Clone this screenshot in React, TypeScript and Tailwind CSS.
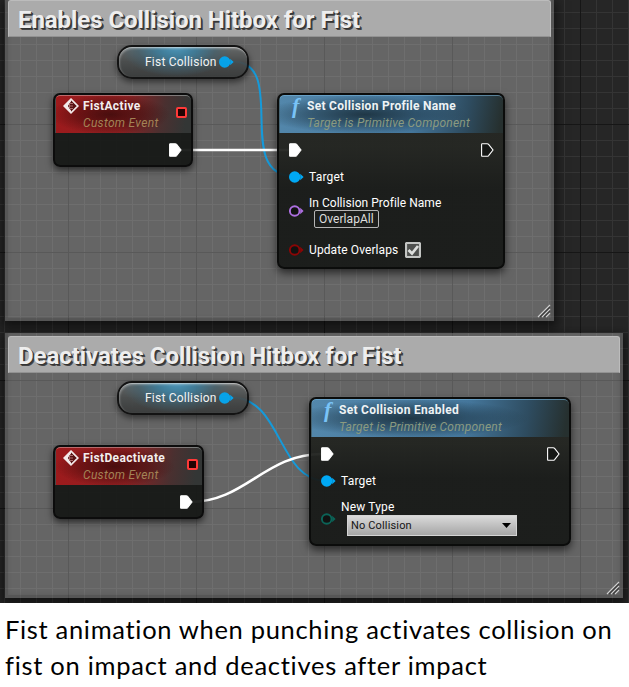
import type { ReactNode } from 'react';

const FONT = "font-['Roboto','Liberation_Sans',sans-serif]";

function Grid() {
  const cols = Array.from({ length: 40 }, (_, i) => 4 + i * 16);
  const rows = Array.from({ length: 38 }, (_, i) => -4 + i * 16);
  const shade = (v: number, origin: number) => ((v - origin) % 128 === 0 ? '#161616' : '#343434');
  return (
    <svg className="absolute inset-0" width="629" height="603" shapeRendering="crispEdges">
      {cols.filter((x) => (x - 68) % 128 !== 0).map((x) => (
        <rect key={x} x={x} y="0" width="1" height="603" fill="#343434" />
      ))}
      {rows.map((y) => (
        <rect key={y} x="0" y={y} width="629" height="1" fill={shade(y, 124)} />
      ))}
      {cols.filter((x) => (x - 68) % 128 === 0).map((x) => (
        <rect key={x} x={x} y="0" width="1" height="603" fill="#161616" />
      ))}
    </svg>
  );
}

function Comment({ title, place, bar }: { title: string; place: string; bar: string }) {
  return (
    <section className={`absolute border-3 border-t-0 border-black/15 bg-white/29 bg-clip-border shadow-[0_4px_10px_3px_rgba(0,0,0,0.5)] ${place}`}>
      <div className="pointer-events-none absolute inset-0 shadow-[inset_0_0_4px_rgba(0,0,0,0.12)]" />
      <header className={`relative flex h-[37px] items-center rounded-t-[3px] border border-[#bcbcbc] border-b-[#929292] bg-[#ababab] pl-[9px] ${bar}`}>
        <h2 className="text-[24px] leading-[34px] font-bold tracking-[-0.06px] whitespace-nowrap text-[#eeeeee] [text-shadow:1px_1px_0_#333,2px_2px_0_#444]">
          {title}
        </h2>
      </header>
      <svg className="absolute right-0 bottom-0" width="14" height="14" fill="none" strokeWidth="1.2">
        <path d="M1 13 13 1M5 13l8-8M9 13l4-4" stroke="#d0d0d0" />
        <path d="M3 13 13 3M7 13l6-6" stroke="#3d3d3d" />
      </svg>
    </section>
  );
}

function ExecPin({ filled = true }: { filled?: boolean }) {
  return (
    <svg width="13" height="14" viewBox="0 0 13 14" className="shrink-0">
      <path d="M1.2.7H6.2Q7 .7 7.6 1.4L12 7 7.6 12.6Q7 13.3 6.2 13.3H1.2Q.6 13.3.6 12.6V1.4Q.6.7 1.2.7Z" fill={filled ? '#fff' : '#151715'} stroke="#fff" strokeWidth="1.1" />
    </svg>
  );
}

function DataPin({ color, hollow = false }: { color: string; hollow?: boolean }) {
  return (
    <svg width="16" height="12" viewBox="0 0 16 12" className="shrink-0">
      <path d="M11.2 2.8 14.6 6l-3.4 3.2Z" fill={color} />
      <circle cx="5.7" cy="6" r={hollow ? 4.8 : 5.7} fill={hollow ? '#111211' : color} stroke={hollow ? color : 'none'} strokeWidth="1.9" />
    </svg>
  );
}

function VariableNode({ place }: { place: string }) {
  return (
    <div className={`absolute h-[34px] w-[132px] rounded-[15px] border-2 border-[#0d0d0d] bg-[radial-gradient(ellipse_56px_30px_at_45%_0%,#4a9cc2_0%,#3d7d9b_35%,rgba(60,100,118,0.55)_70%,transparent_100%),linear-gradient(#666969,#484b4b_50%,#383a3a)] opacity-92 shadow-[0_3px_6px_rgba(0,0,0,0.55)] ${place}`}>
      <div className="flex h-[30px] items-center rounded-[13px] border-t border-white/55 pr-[12px] pb-[2px] pl-[26px] shadow-[inset_1px_1px_2px_rgba(255,255,255,0.3)]">
        <span className="w-[76px] pt-px text-[12px] leading-[14px] tracking-[0.22px] whitespace-nowrap text-white">Fist Collision</span>
        <DataPin color="#00a8f4" />
      </div>
    </div>
  );
}

function EventNode({ title, place }: { title: string; place: string }) {
  return (
    <div className={`absolute h-[74px] overflow-hidden rounded-[7px] border-2 border-[#0c0c0c] bg-[#161816]/95 shadow-[0_3px_7px_rgba(0,0,0,0.6)] ${place}`}>
      <header className="relative flex h-[38px] rounded-t-[5px] border-t border-l border-t-white/35 border-l-white/10 bg-[radial-gradient(ellipse_60px_20px_at_40%_50%,rgba(50,8,8,0.75),rgba(60,8,8,0.45)_55%,transparent),linear-gradient(100deg,#9e1a1c_0%,#8c2022_50%,#4a3030_78%,#333635_95%)] pl-[7px]">
        <svg className="mt-[2px] shrink-0" width="16" height="16" viewBox="0 0 16 16">
          <path d="M8 1.2 14.8 8 8 14.8 1.2 8Z" fill="#571012" stroke="#f3eaea" strokeWidth="1.7" />
          <path d="M8 1 1 8l7 7V12.5L4.8 8 8 3.5Z" fill="#f3eaea" />
          <path d="M6.5 5.5h3.5M6.5 8h3.5M6.5 10.5h3.5M6.5 5v6" stroke="#a86b6b" />
        </svg>
        <div className="pl-[4px]">
          <div className="mt-[2px] text-[12px] leading-[16px] font-bold tracking-[0.36px] whitespace-nowrap text-[#f3eeee]">{title}</div>
          <div className="mt-px text-[12px] leading-[16px] tracking-[0.3px] whitespace-nowrap text-[#a38356] italic">Custom Event</div>
        </div>
        <span className="absolute top-[11px] right-[4px] size-[11px] rounded-[2px] border-2 border-[#ff3938] bg-[#230303]" />
      </header>
      <div className="flex justify-end pt-[10px] pr-[9px]"><ExecPin /></div>
    </div>
  );
}

function FunctionNode({ title, place, children }: { title: string; place: string; children: ReactNode }) {
  return (
    <div className={`absolute overflow-hidden rounded-[7px] border-2 border-[#0b0c0b] bg-linear-to-b from-[#222420]/95 from-30% to-[#181a18]/95 to-55% shadow-[0_4px_8px_rgba(0,0,0,0.6)] ${place}`}>
      <header className="flex h-[38px] rounded-t-[5px] border-t border-l border-t-[#78b4da]/60 border-l-[#78b4da]/40 bg-[radial-gradient(ellipse_46%_19px_at_38%_50%,rgba(24,43,54,0.85),rgba(29,52,67,0.5)_55%,transparent),linear-gradient(100deg,#5387ab_0%,#44769b_60%,#2e4c60_83%,#26302f_98%)] pl-[10px]">
        <span className="w-[15px] shrink-0 pl-[2px] font-['Liberation_Serif',serif] text-[22px] leading-[20px] font-bold text-[#79c3f7] italic">f</span>
        <div className="pl-[2px]">
          <div className="mt-[2px] text-[12px] leading-[16px] font-bold tracking-[0.29px] whitespace-nowrap text-[#eef3f5]">{title}</div>
          <div className="mt-px text-[12px] leading-[16px] tracking-[0.22px] whitespace-nowrap text-[#8a9a80] italic">Target is Primitive Component</div>
        </div>
      </header>
      <div className="flex justify-between pt-[10px] pr-[9px] pl-[10px]">
        <ExecPin />
        <ExecPin filled={false} />
      </div>
      <div className="mt-[12px] flex h-[16px] items-center gap-[4px] pl-[10px]">
        <div className="pb-px"><DataPin color="#00a8f4" /></div>
        <span className="text-[12px] leading-[16px] tracking-[0.2px] text-white">Target</span>
      </div>
      {children}
    </div>
  );
}

export default function App() {
  return (
    <main className={`h-[687px] w-[629px] overflow-hidden bg-white ${FONT}`}>
      <div className="relative h-[603px] overflow-hidden bg-[#262626]">
        <Grid />
        <Comment title="Enables Collision Hitbox for Fist" place="top-0 left-[5px] h-[321px] w-[549px]" bar="pt-[3px]" />
        <Comment title="Deactivates Collision Hitbox for Fist" place="top-[333px] left-[5px] h-[265px] w-[618px] pt-[3px]" bar="pt-[2px]" />
        <svg className="absolute inset-0" width="629" height="603" fill="none">
          <path d="M232 61.5C290 61.5 232 176 294 176" stroke="#159ada" strokeWidth="2" />
          <path d="M232 397.5C282 397.5 278 481 326 481" stroke="#159ada" strokeWidth="2" />
          <path d="M180 150H292" stroke="#fff" strokeWidth="2.6" />
          <path d="M190 502C245 502 265 454 322 454" stroke="#fff" strokeWidth="2.6" />
        </svg>

        <VariableNode place="top-[45px] left-[117px]" />
        <EventNode title="FistActive" place="top-[93px] left-[53px] w-[140px]" />
        <FunctionNode title="Set Collision Profile Name" place="top-[93px] left-[277px] h-[176px] w-[228px]">
          <div className="mt-[10px] flex items-center gap-[4px] pl-[10px]">
            <div className="pb-[3px]"><DataPin color="#ad6fe0" hollow /></div>
            <div className="pb-px">
              <div className="text-[12px] leading-[16px] tracking-[0.03px] whitespace-nowrap text-white">In Collision Profile Name</div>
              <div className="mt-[-1px] mb-px ml-[5px] flex h-[18px] w-[65px] items-center rounded-[2px] border border-[#b5b5b5] pl-[4px] text-[12px] leading-[16px] tracking-[0.05px] text-[#dedede]">OverlapAll</div>
            </div>
          </div>
          <div className="mt-[12px] flex h-[16px] items-center gap-[4px] pl-[10px]">
            <DataPin color="#8b0505" hollow />
            <span className="w-[92px] text-[12px] leading-[16px] tracking-[0.1px] whitespace-nowrap text-white">Update Overlaps</span>
            <svg width="16" height="16" viewBox="0 0 16 16">
              <rect x="1" y="1" width="14" height="14" rx="1" fill="#4e504e" stroke="#c3c5c3" strokeWidth="2.2" />
              <path d="M3.5 8 7 11.5 13 4" fill="none" stroke="#dcdedc" strokeWidth="2.8" />
            </svg>
          </div>
        </FunctionNode>

        <VariableNode place="top-[381px] left-[117px]" />
        <EventNode title="FistDeactivate" place="top-[445px] left-[53px] w-[151px]" />
        <FunctionNode title="Set Collision Enabled" place="top-[397px] left-[309px] h-[149px] w-[262px]">
          <div className="mt-[10px] flex items-center gap-[4px] pl-[10px]">
            <div className="pt-[2px]"><DataPin color="#0b6357" hollow /></div>
            <div>
              <div className="text-[12px] leading-[16px] tracking-[0.15px] text-white">New Type</div>
              <div className="ml-[6px] flex h-[21px] w-[170px] items-center justify-between border border-[#d4d4d4] bg-linear-to-b from-[#dadada] to-[#a6a6a6] pr-[5px] pl-[3px] text-[11px] leading-[16px] tracking-[0.15px] text-[#151515]">
                No Collision
                <svg width="9" height="5"><path d="M0 0h9L4.5 5Z" fill="#000" /></svg>
              </div>
            </div>
          </div>
        </FunctionNode>
      </div>
      <p className="pt-[8px] pl-[5px] font-['Lato',sans-serif] text-[25.5px] leading-[36px] text-black">
        <span className="block tracking-[0.68px] whitespace-nowrap">Fist animation when punching activates collision on</span>
        <span className="block tracking-[0.72px] whitespace-nowrap">fist on impact and deactives after impact</span>
      </p>
    </main>
  );
}
